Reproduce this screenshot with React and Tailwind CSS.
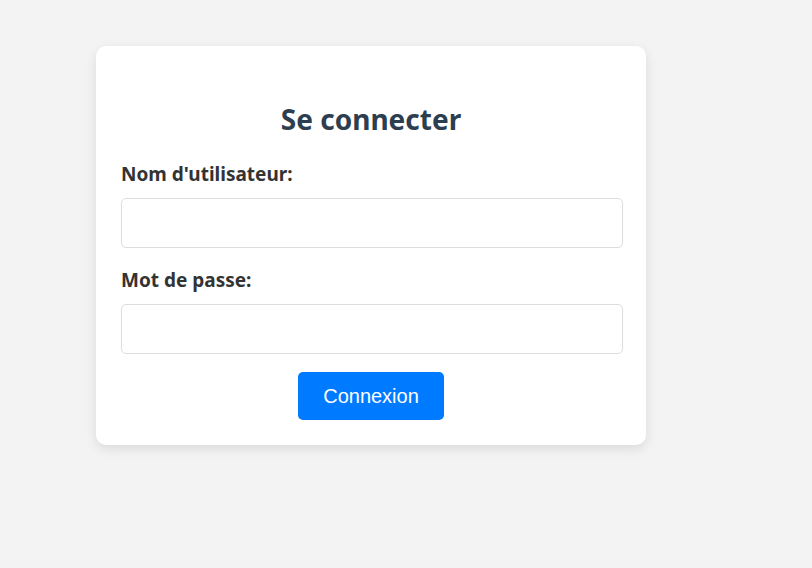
export default function App() {
  return (
    <div className="min-h-[568px] w-[812px] bg-[#f3f3f3] pt-[46px] pl-[96px]" style={{ fontFamily: "'Noto Sans', 'Open Sans', sans-serif" }}>
      <div className="w-[550px] rounded-[10px] bg-white px-[25px] pt-[25px] pb-[25px] shadow-[0_4px_12px_rgba(0,0,0,0.1)]">
        <h2 className="mt-[30px] mb-[26px] w-[500px] text-center text-[28px] leading-[36px] font-bold text-[#2c3e50]">Se connecter</h2>
        <label className="block text-[19px] leading-[22px] font-bold text-[#333]">Nom d'utilisateur:</label>
        <input className="mt-[13px] block h-[50px] w-[502px] rounded-[5px] border border-[#ddd] bg-white" type="text" />
        <label className="mt-[21px] block text-[19px] leading-[22px] font-bold text-[#333]">Mot de passe:</label>
        <input className="mt-[13px] block h-[50px] w-[502px] rounded-[5px] border border-[#ddd] bg-white" type="password" />
        <div className="mt-[18px] flex w-[500px] justify-center">
          <button className="h-[48px] w-[146px] rounded-[5px] bg-[#007bff] text-[20px] text-white" style={{ fontFamily: "'Liberation Sans', Arial, sans-serif" }}>Connexion</button>
        </div>
      </div>
    </div>
  );
}
